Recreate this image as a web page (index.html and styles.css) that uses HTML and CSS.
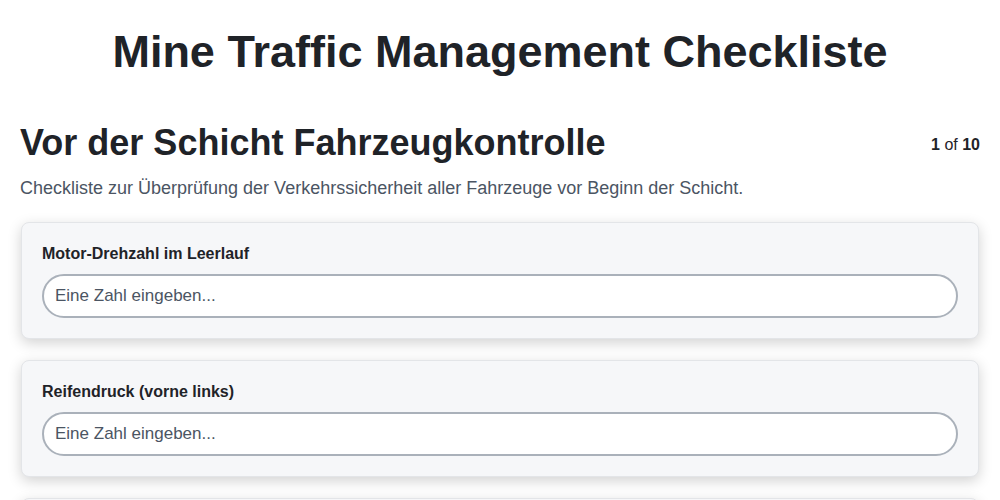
FILE: index.html
```html
<!DOCTYPE html>
<html lang="de">
<head>
    <meta charset="UTF-8">
    <meta name="viewport" content="width=device-width, initial-scale=1.0">
    <title>Mine Traffic Management Checkliste</title>
    <link rel="stylesheet" href="styles.css">
</head>
<body>
    <div class="page">
        <h1 class="page-title">Mine Traffic Management Checkliste</h1>

        <section class="checklist">
            <div class="checklist-head">
                <h2>Vor der Schicht Fahrzeugkontrolle</h2>
                <div class="progress"><strong>1</strong> of <strong>10</strong></div>
            </div>
            <p class="checklist-desc">Checkliste zur Überprüfung der Verkehrssicherheit aller Fahrzeuge vor Beginn der Schicht.</p>

            <div class="item-card">
                <label class="item-label" for="q1">Motor-Drehzahl im Leerlauf</label>
                <input class="item-input" id="q1" type="number" placeholder="Eine Zahl eingeben...">
            </div>

            <div class="item-card">
                <label class="item-label" for="q2">Reifendruck (vorne links)</label>
                <input class="item-input" id="q2" type="number" placeholder="Eine Zahl eingeben...">
            </div>

            <div class="item-card">
                <label class="item-label" for="q3">Reifendruck (vorne rechts)</label>
                <input class="item-input" id="q3" type="number" placeholder="Eine Zahl eingeben...">
            </div>
        </section>
    </div>
</body>
</html>
```

FILE: styles.css
```css
/* Reset and base styles */
* {
    margin: 0;
    padding: 0;
    box-sizing: border-box;
}

body {
    font-family: "Liberation Sans", Arial, sans-serif;
    background-color: #fff;
    color: #1f2328;
}

.page {
    padding: 0 20px;
}

.page-title {
    font-size: 45px;
    font-weight: bold;
    text-align: center;
    line-height: 56px;
    padding-top: 24px;
    margin-bottom: 42px;
}

/* Checklist header */
.checklist-head {
    display: flex;
    justify-content: space-between;
    align-items: flex-start;
}

.checklist-head h2 {
    font-size: 36px;
    line-height: 42px;
    font-weight: bold;
}

.progress {
    font-size: 16px;
    padding-top: 14px;
    color: #1f2328;
}

.checklist-desc {
    font-size: 18px;
    color: #4b5563;
    margin-top: 14px;
    margin-bottom: 23px;
}

/* Checklist items */
.item-card {
    background-color: #f6f7f9;
    border: 1px solid #e3e5e8;
    border-radius: 8px;
    box-shadow: 0 4px 14px rgba(0, 0, 0, 0.18);
    padding: 22px 20px 20px 20px;
    margin: 0 1px 21px;
}

.item-label {
    display: block;
    font-size: 16px;
    line-height: 18px;
    font-weight: bold;
    color: #1f2328;
    margin-bottom: 11px;
}

.item-input {
    display: block;
    width: 100%;
    height: 44px;
    border: 2px solid #aab1ba;
    border-radius: 22px;
    background-color: #fff;
    padding: 0 11px;
    font-family: inherit;
    font-size: 17px;
    color: #1f2328;
    outline: none;
}

.item-input::placeholder {
    color: #4b5563;
}
```
